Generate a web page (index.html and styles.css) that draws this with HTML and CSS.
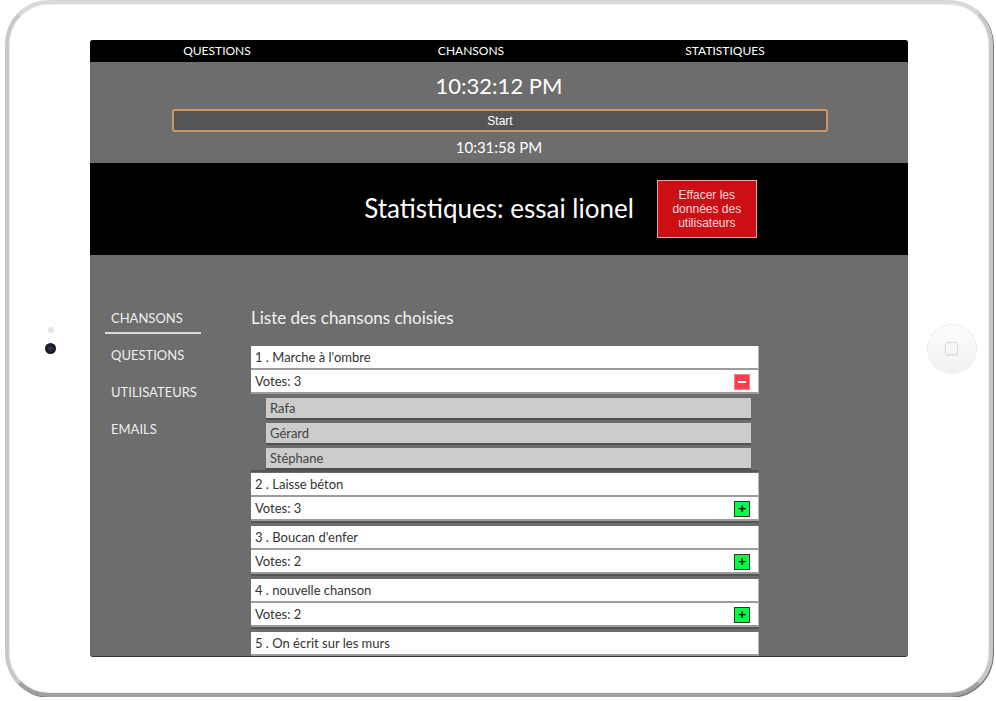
FILE: index.html
```html
<!DOCTYPE html>
<html lang="fr">
<head>
    <meta charset="UTF-8">
    <meta name="viewport" content="width=device-width, initial-scale=1.0">
    <title>Statistiques: essai lionel</title>
    <link rel="stylesheet" href="styles.css">
</head>
<body>
    <div class="device">
        <div class="bezel-left">
            <span class="sensor"></span>
            <span class="camera"></span>
        </div>

        <div class="screen">
            <nav class="topnav">
                <a href="#">QUESTIONS</a>
                <a href="#">CHANSONS</a>
                <a href="#">STATISTIQUES</a>
            </nav>

            <div class="timer">
                <div class="clock">10:32:12 PM</div>
                <button class="start-btn">Start</button>
                <div class="started">10:31:58 PM</div>
            </div>

            <header class="stats-header">
                <span></span>
                <h1>Statistiques: essai lionel</h1>
                <div><button class="clear-btn">Effacer les données des utilisateurs</button></div>
            </header>

            <div class="content">
                <ul class="sidebar">
                    <li class="active"><a href="#">CHANSONS</a></li>
                    <li><a href="#">QUESTIONS</a></li>
                    <li><a href="#">UTILISATEURS</a></li>
                    <li><a href="#">EMAILS</a></li>
                </ul>

                <div class="songs">
                    <h2>Liste des chansons choisies</h2>

                    <div class="song">
                        <div class="row">1 . Marche à l'ombre</div>
                        <div class="row">Votes: 3 <span class="toggle minus"></span></div>
                        <div class="voters">
                            <div class="voter">Rafa</div>
                            <div class="voter">Gérard</div>
                            <div class="voter">Stéphane</div>
                        </div>
                    </div>
                    <div class="song">
                        <div class="row">2 . Laisse béton</div>
                        <div class="row">Votes: 3 <span class="toggle plus">+</span></div>
                    </div>
                    <div class="song">
                        <div class="row">3 . Boucan d'enfer</div>
                        <div class="row">Votes: 2 <span class="toggle plus">+</span></div>
                    </div>
                    <div class="song">
                        <div class="row">4 . nouvelle chanson</div>
                        <div class="row">Votes: 2 <span class="toggle plus">+</span></div>
                    </div>
                    <div class="song">
                        <div class="row">5 . On écrit sur les murs</div>
                    </div>
                </div>
            </div>
        </div>

        <div class="bezel-right">
            <span class="home"><span class="home-square"></span></span>
        </div>
    </div>
</body>
</html>
```

FILE: styles.css
```css
body {
    margin: 0;
    background: #fff;
    font-family: Lato, "Open Sans", sans-serif;
}
.device {
    display: flex;
    align-items: center;
    width: 988px;
    height: 697px;
    margin-left: 5px;
    box-sizing: border-box;
    border: 4px solid #c8c8c8;
    border-top-color: #d8d8d8;
    border-bottom-color: #a0a0a0;
    border-radius: 44px;
    background: #fff;
    box-shadow: inset 0 0 0 1px #eee, 1px 1px 0 #777;
}
.bezel-left {
    width: 81px;
    box-sizing: border-box;
    padding-left: 2px;
    display: flex;
    flex-direction: column;
    align-items: center;
    gap: 10px;
    margin-bottom: 16px;
}
.sensor {
    width: 6px;
    height: 6px;
    border-radius: 50%;
    background: #e4e4e4;
}
.camera {
    width: 11px;
    height: 11px;
    border-radius: 50%;
    background: radial-gradient(circle at 50% 50%, #35406a 0, #1a1a22 45%, #111 100%);
}
.bezel-right {
    flex: 1;
    display: flex;
    justify-content: center;
    padding-left: 6px;
}
.home {
    width: 48px;
    height: 48px;
    border-radius: 50%;
    background: linear-gradient(#fcfcfc, #f1f1f1);
    box-shadow: 0 0 0 1px #ececec;
    display: flex;
    align-items: center;
    justify-content: center;
}
.home-square {
    width: 11px;
    height: 11px;
    border: 1px solid #dcdcdc;
    border-radius: 3px;
    background: #f7f7f7;
    box-shadow: 0 1px 1px #e4e4e4;
}

.screen {
    width: 818px;
    height: 616px;
    overflow: hidden;
    background: #6d6d6d;
    border-radius: 3px;
    border-bottom: 1px solid #333;
    color: #fff;
}

.topnav {
    display: grid;
    grid-template-columns: 254px 254px 254px;
    height: 22px;
    background: #000;
}
.topnav a {
    color: #fff;
    text-decoration: none;
    text-align: center;
    font-size: 12px;
    line-height: 22px;
}

.timer {
    height: 101px;
    text-align: center;
    box-sizing: border-box;
    padding-top: 10px;
}
.clock {
    font-size: 22px;
    line-height: 28px;
}
.start-btn {
    display: block;
    width: 656px;
    height: 23px;
    margin: 9px 0 0 82px;
    background: #555;
    border: 2px solid #c9975f;
    border-radius: 3px;
    color: #fff;
    font-family: "Liberation Sans", Arial, sans-serif;
    font-size: 12px;
}
.started {
    font-size: 15px;
    line-height: 20px;
    margin-top: 5px;
}

.stats-header {
    display: grid;
    grid-template-columns: 1fr auto 1fr;
    align-items: center;
    height: 92px;
    background: #000;
}
.stats-header h1 {
    margin: 0 0 2px;
    font-weight: 400;
    font-size: 26px;
}
.clear-btn {
    width: 100px;
    height: 58px;
    margin-left: 23px;
    padding: 0 8px;
    background: #cc0f14;
    border: 1px solid #e9a2a2;
    color: #fbdcdc;
    font-family: "Liberation Sans", Arial, sans-serif;
    font-size: 12px;
    line-height: 14px;
}

.content {
    display: flex;
    padding: 50px 0 0 15px;
}
.sidebar {
    list-style: none;
    margin: 0;
    padding: 0;
    width: 146px;
    flex-shrink: 0;
}
.sidebar li {
    width: 96px;
    height: 37px;
    box-sizing: border-box;
}
.sidebar a {
    display: block;
    padding: 5px 0 0 6px;
    color: #eee;
    text-decoration: none;
    font-size: 13px;
    line-height: 17px;
}
.sidebar .active a {
    padding-bottom: 5px;
    border-bottom: 2px solid #d8d8d8;
}

.songs {
    width: 508px;
}
.songs h2 {
    margin: 2px 0 18px;
    font-weight: 400;
    font-size: 17px;
    color: #f2f2f2;
}
.song {
    margin-bottom: 5px;
    box-shadow: 0 2px 0 #555;
}
.row {
    position: relative;
    height: 22px;
    padding-left: 4px;
    background: #fff;
    border-bottom: 2px solid #9c9c9c;
    border-right: 1px solid #bbb;
    color: #333;
    font-size: 13px;
    line-height: 22px;
}
.toggle {
    position: absolute;
    right: 8px;
    top: 4px;
    width: 16px;
    height: 16px;
    box-sizing: border-box;
}
.minus {
    background: #ff3f50;
    border: 1px solid #ff7b86;
}
.minus::after {
    content: "";
    position: absolute;
    left: 3px;
    right: 3px;
    top: 6px;
    height: 2px;
    background: #fff;
}
.plus {
    background: #00ff45;
    border: 1px solid #333;
    color: #000;
    font-family: "DejaVu Sans", sans-serif;
    font-size: 11px;
    font-weight: 700;
    line-height: 14px;
    text-align: center;
}
.voters {
    padding: 4px 8px 0 15px;
    margin-bottom: -2px;
    background: #6d6d6d;
}
.voter {
    height: 20px;
    margin-bottom: 3px;
    padding-left: 4px;
    background: #ccc;
    border-bottom: 2px solid #505050;
    color: #444;
    font-size: 13px;
    line-height: 20px;
}
.voter:last-child {
    margin-bottom: 0;
}
```
